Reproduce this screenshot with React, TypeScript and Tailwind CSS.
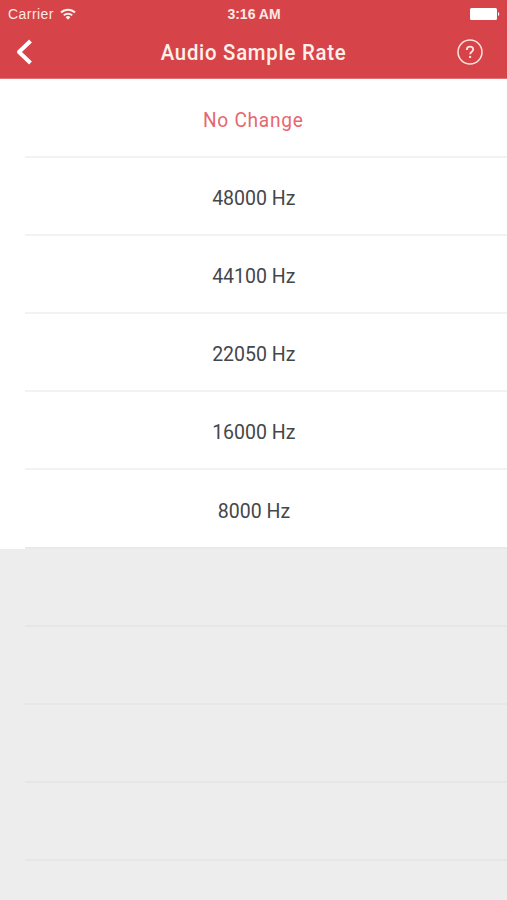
import React from 'react';

const rates = [
  { label: 'No Change', style: 'text-[#e5686f] tracking-[0.8px] scale-x-[0.91]' },
  { label: '48000 Hz', style: 'text-[#44474a] scale-x-[0.93]' },
  { label: '44100 Hz', style: 'text-[#44474a] scale-x-[0.93]' },
  { label: '22050 Hz', style: 'text-[#44474a] scale-x-[0.93]' },
  { label: '16000 Hz', style: 'text-[#44474a] scale-x-[0.93]' },
  { label: '8000 Hz', style: 'text-[#44474a] scale-x-[0.93]' },
];

function StatusBar() {
  return (
    <div className="grid h-[27px] grid-cols-3 items-center pl-2 pr-[7px] font-['Liberation_Sans',sans-serif] leading-none text-[#ffe9e3]">
      <div className="flex items-center gap-[6px]">
        <span className="text-[14px] tracking-[0.45px]">Carrier</span>
        <svg width="16" height="12" viewBox="0 0 16 12" fill="none" stroke="#fff0eb" strokeWidth="2">
          <path d="M1 4.5a10 10 0 0 1 14 0" />
          <path d="M3.8 7.4a6 6 0 0 1 8.4 0" />
          <path d="M8 11.7L5.6 9.3a3.4 3.4 0 0 1 4.8 0z" fill="#fff0eb" stroke="none" />
        </svg>
      </div>
      <span className="whitespace-nowrap text-center text-[14px] font-bold">3:16 AM</span>
      <svg className="justify-self-end" width="30" height="12" viewBox="0 0 30 12" fill="#fff">
        <rect width="27" height="12" rx="1.5" />
        <path d="M28 4a2.2 2.2 0 0 1 0 4z" />
      </svg>
    </div>
  );
}

function NavBar() {
  return (
    <div className="grid h-[50px] grid-cols-[80px_1fr_80px] items-center">
      <button aria-label="Back" className="pl-[15px]">
        <svg width="18" height="26" viewBox="0 0 18 26" fill="none" stroke="#fff" strokeWidth="4" strokeLinejoin="round">
          <path d="M15.5 2L4 13l11.5 11" />
        </svg>
      </button>
      <h1 className="scale-x-[0.925] whitespace-nowrap pt-[2px] text-center text-[22px] font-medium leading-none tracking-[0.8px] text-[#fff1ea]">
        Audio Sample Rate
      </h1>
      <button aria-label="Help" className="flex justify-end pr-6">
        <svg width="26" height="26" viewBox="0 0 26 26" fill="none" stroke="#ffe3df">
          <circle cx="13" cy="13" r="12" strokeWidth="1.5" />
          <path d="M9.9 11V10.4c0-1.8 1.3-2.8 3.1-2.8s3.2 1.1 3.2 2.8c0 2.3-3 2.4-3 4.9" strokeWidth="1.8" />
          <path d="M13.1 16.9v2.1" strokeWidth="2" />
        </svg>
      </button>
    </div>
  );
}

export default function App() {
  return (
    <div className="flex h-[900px] w-[507px] flex-col overflow-hidden bg-[#ededed] font-[Roboto,sans-serif]">
      <header className="h-[79px] shrink-0 border-b border-[#df7176] bg-[#d64349]">
        <StatusBar />
        <NavBar />
      </header>
      <ul className="shrink-0 bg-white pt-[0.5px]">
        {rates.map((rate, index) => (
          <li key={rate.label} className="flex h-[78.2px] flex-col">
            <div className="flex flex-1 items-center justify-center pt-[5px]">
              <span className={`whitespace-nowrap text-[21px] leading-none ${rate.style}`}>{rate.label}</span>
            </div>
            <div
              className={`ml-[25px] h-[2px] shrink-0 ${index === rates.length - 1 ? 'bg-[#e9e9e9]' : 'bg-[#f2f2f2]'}`}
            />
          </li>
        ))}
      </ul>
      {[0, 1, 2, 3].map((row) => (
        <div key={row} className="flex h-[78.2px] shrink-0 flex-col justify-end">
          <div className="ml-[25px] h-[2px] bg-[#e6e6e6]" />
        </div>
      ))}
    </div>
  );
}
